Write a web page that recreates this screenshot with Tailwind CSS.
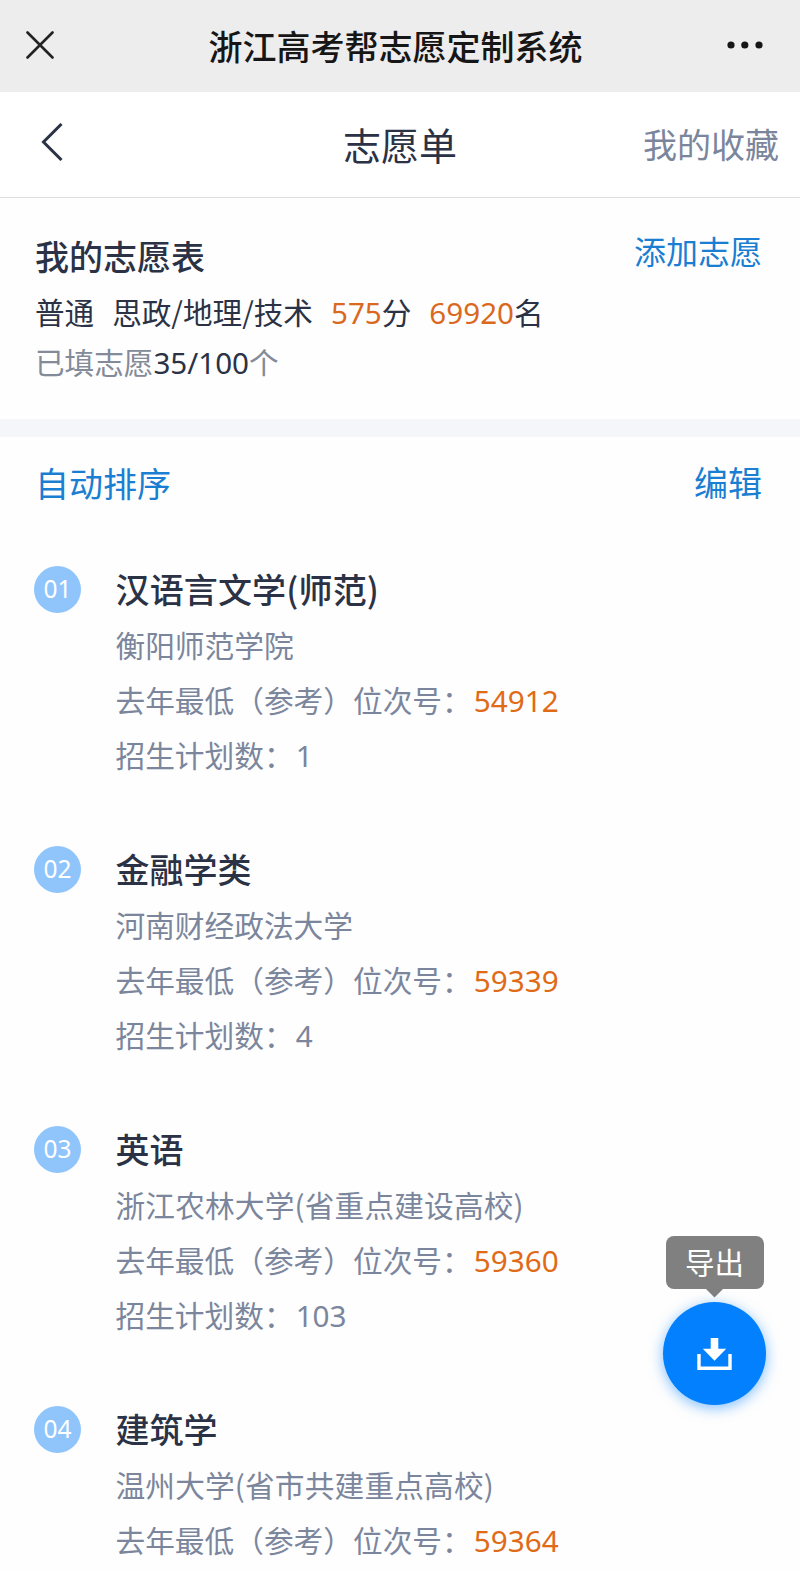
<!DOCTYPE html>
<html lang="zh-CN">
  <head>
    <meta charset="UTF-8" />
    <meta name="viewport" content="width=device-width, initial-scale=1.0" />
    <title>浙江高考帮志愿定制系统</title>
    <script src="https://cdn.jsdelivr.net/npm/@tailwindcss/browser@4"></script>
  </head>
  <body
    class="relative h-[1571px] overflow-hidden bg-[#fefefe] font-['Noto_Sans_CJK_SC',sans-serif] text-[#2b3245]"
  >
    <header
      class="grid h-[92px] grid-cols-[1fr_auto_1fr] items-center bg-[#ededed] pr-[37px] pb-[3px] pl-[26px]"
    >
      <svg class="size-7" viewBox="0 0 28 28" fill="none" stroke="#222" stroke-width="2.6" stroke-linecap="round">
        <path d="M1.5 1.5l25 25M26.5 1.5l-25 25" />
      </svg>
      <h1 class="ml-0.5 pt-[3px] text-[34px] leading-none font-medium text-[#161616]">浙江高考帮志愿定制系统</h1>
      <svg class="h-2 w-[36px] justify-self-end" viewBox="0 0 36 8" fill="#161616">
        <circle cx="4" cy="4" r="3.6" />
        <circle cx="17.8" cy="4" r="3.6" />
        <circle cx="32" cy="4" r="3.6" />
      </svg>
    </header>

    <nav
      class="grid h-[106px] grid-cols-[1fr_auto_1fr] items-center border-b border-[#dedfe1] bg-white pr-[21px] pb-[5px] pl-[21px]"
    >
      <svg class="ml-5 h-[38px] w-[22px]" viewBox="0 0 22 38" fill="none" stroke="#2b3245" stroke-width="3">
        <path d="M20.5 1L2.5 19l18 18" />
      </svg>
      <h2 class="pt-[3px] text-[38px] leading-none">志愿单</h2>
      <a href="#" class="justify-self-end pt-[3px] text-[34px] leading-none text-[#7b869c]">我的收藏</a>
    </nav>

    <section class="flex h-[221px] justify-between pr-[38px] pl-[35px]">
      <div>
        <h3 class="mt-[33px] text-[34px] leading-[50px] font-medium">我的志愿表</h3>
        <p class="mt-1.5 flex text-[29.6px] leading-[50px]">
          <span>普通</span>
          <span class="ml-[18px]">思政/地理/技术</span>
          <span class="ml-[18px]"><span class="font-['Noto_Sans'] leading-none text-[#d9691e]">575</span>分</span>
          <span class="ml-[18px]"><span class="font-['Noto_Sans'] leading-none text-[#d9691e]">69920</span>名</span>
        </p>
        <p class="text-[29.6px] leading-[50px] text-[#838a98]">
          已填志愿<span class="font-['Noto_Sans'] leading-none text-[#2b3245]">35/100</span>个
        </p>
      </div>
      <a href="#" class="mt-[27px] text-[32px] leading-[50px] text-[#1a7ed2]">添加志愿</a>
    </section>

    <div class="h-[18px] bg-[#f5f6f9]"></div>

    <div class="flex h-[123px] justify-between pt-[21px] pr-[38px] pl-[35px] text-[34px] leading-[50px] text-[#1a7ed2]">
      <button class="self-start">自动排序</button>
      <button class="-mt-px self-start">编辑</button>
    </div>

    <ul>
      <li class="flex h-[280px] pl-[34px]">
        <span class="mt-1.5 flex size-[47px] shrink-0 items-center justify-center rounded-full bg-[#90c5fb] font-['Noto_Sans'] text-[24.5px] text-white">01</span>
        <div class="ml-[34.5px] pt-px text-[29.7px] leading-[55px] text-[#7b869c]">
          <h4 class="text-[34px] leading-[56px] font-medium tracking-[0.15px] text-[#2b3245]">汉语言文学(师范)</h4>
          <p>衡阳师范学院</p>
          <p>去年最低（参考）位次号：<span class="ml-0.5 font-['Noto_Sans'] leading-none text-[#e06a16]">54912</span></p>
          <p>招生计划数：<span class="ml-0.5 font-['Noto_Sans'] leading-none">1</span></p>
        </div>
      </li>
      <li class="flex h-[280px] pl-[34px]">
        <span class="mt-1.5 flex size-[47px] shrink-0 items-center justify-center rounded-full bg-[#90c5fb] font-['Noto_Sans'] text-[24.5px] text-white">02</span>
        <div class="ml-[34.5px] pt-px text-[29.7px] leading-[55px] text-[#7b869c]">
          <h4 class="text-[34px] leading-[56px] font-medium text-[#2b3245]">金融学类</h4>
          <p>河南财经政法大学</p>
          <p>去年最低（参考）位次号：<span class="ml-0.5 font-['Noto_Sans'] leading-none text-[#e06a16]">59339</span></p>
          <p>招生计划数：<span class="ml-0.5 font-['Noto_Sans'] leading-none">4</span></p>
        </div>
      </li>
      <li class="flex h-[280px] pl-[34px]">
        <span class="mt-1.5 flex size-[47px] shrink-0 items-center justify-center rounded-full bg-[#90c5fb] font-['Noto_Sans'] text-[24.5px] text-white">03</span>
        <div class="ml-[34.5px] pt-px text-[29.7px] leading-[55px] text-[#7b869c]">
          <h4 class="text-[34px] leading-[56px] font-medium text-[#2b3245]">英语</h4>
          <p class="tracking-[0.15px]">浙江农林大学(省重点建设高校)</p>
          <p>去年最低（参考）位次号：<span class="ml-0.5 font-['Noto_Sans'] leading-none text-[#e06a16]">59360</span></p>
          <p>招生计划数：<span class="ml-0.5 font-['Noto_Sans'] leading-none">103</span></p>
        </div>
      </li>
      <li class="flex h-[171px] overflow-hidden pl-[34px]">
        <span class="mt-1.5 flex size-[47px] shrink-0 items-center justify-center rounded-full bg-[#90c5fb] font-['Noto_Sans'] text-[24.5px] text-white">04</span>
        <div class="ml-[34.5px] pt-px text-[29.7px] leading-[55px] text-[#7b869c]">
          <h4 class="text-[34px] leading-[56px] font-medium text-[#2b3245]">建筑学</h4>
          <p class="tracking-[0.15px]">温州大学(省市共建重点高校)</p>
          <p>去年最低（参考）位次号：<span class="ml-0.5 font-['Noto_Sans'] leading-none text-[#e06a16]">59364</span></p>
        </div>
      </li>
    </ul>

    <!-- export button -->
    <div class="absolute top-[1236px] right-[34px] flex w-[103px] flex-col items-center">
      <div class="h-[53px] w-[98px] rounded-lg bg-[#808080] text-center text-[29.5px] leading-[51px] text-white">导出</div>
      <svg class="h-[9px] w-[17px]" viewBox="0 0 17 9" fill="#808080"><path d="M0 0h17L8.5 8.5z" /></svg>
      <button class="mt-1 flex size-[103px] items-center justify-center rounded-full bg-[#0380fe] shadow-[0_3px_14px_rgba(3,128,254,0.5)]">
        <svg class="h-8 w-[35px]" viewBox="0 0 35 32">
          <path d="M13.7 0h7.6v10.7h7.9L17.5 22.8 5.8 10.7h7.9z" fill="#fff" />
          <path d="M2 16v14.3h31V16" fill="none" stroke="#fff" stroke-width="3.4" />
        </svg>
      </button>
    </div>
  </body>
</html>
